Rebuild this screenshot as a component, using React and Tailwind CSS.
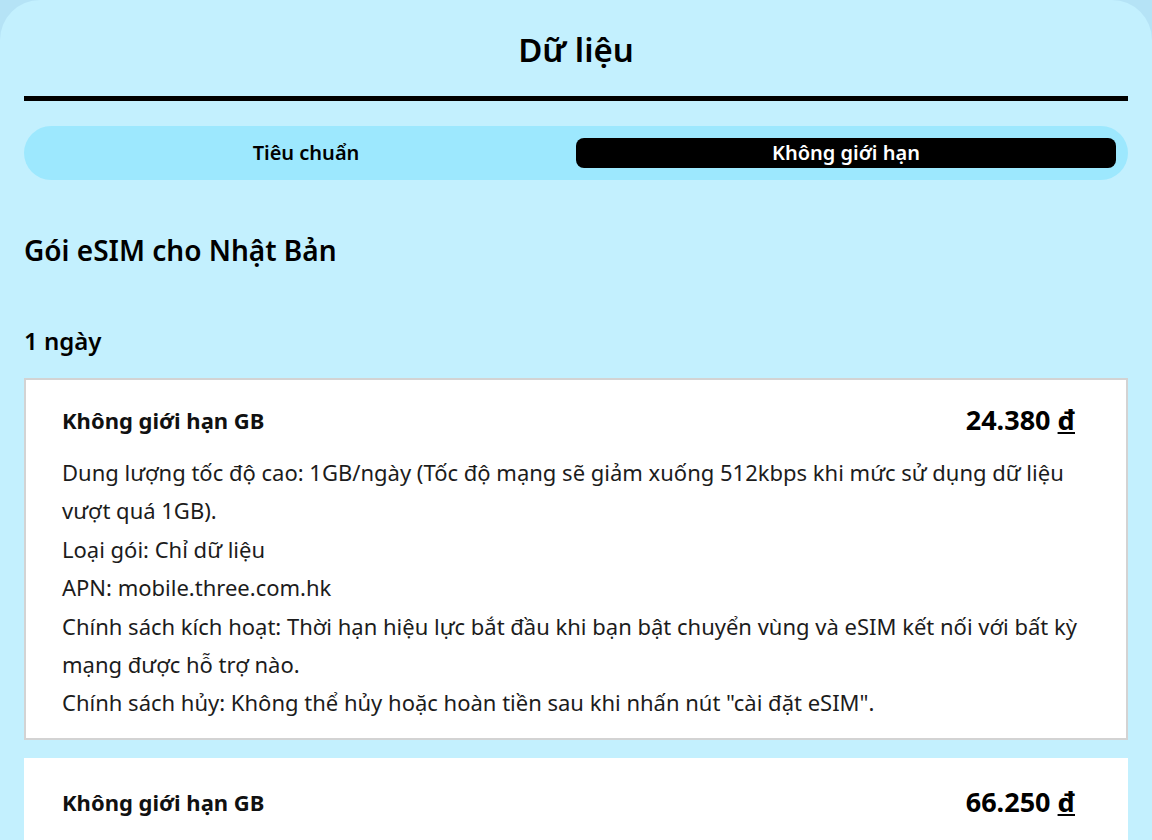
import React from 'react';

const plans = [
  {
    title: 'Không giới hạn GB',
    price: '24.380',
    lines: [
      'Dung lượng tốc độ cao: 1GB/ngày (Tốc độ mạng sẽ giảm xuống 512kbps khi mức sử dụng dữ liệu vượt quá 1GB).',
      'Loại gói: Chỉ dữ liệu',
      'APN: mobile.three.com.hk',
      'Chính sách kích hoạt: Thời hạn hiệu lực bắt đầu khi bạn bật chuyển vùng và eSIM kết nối với bất kỳ mạng được hỗ trợ nào.',
      'Chính sách hủy: Không thể hủy hoặc hoàn tiền sau khi nhấn nút "cài đặt eSIM".',
    ],
  },
  {
    title: 'Không giới hạn GB',
    price: '66.250',
    lines: [
      'Dung lượng tốc độ cao: 3GB/ngày (Tốc độ mạng sẽ giảm xuống 512kbps khi mức sử dụng dữ liệu vượt quá 3GB).',
      'Loại gói: Chỉ dữ liệu',
      'APN: mobile.three.com.hk',
    ],
  },
];

function PlanCard({ plan, selected }) {
  return (
    <div
      className={`border-2 bg-white pl-[36px] pr-[36px] pb-[16px] ${
        selected ? 'border-[#d3d3d3] pt-[26px]' : 'border-transparent pt-[28px]'
      }`}
    >
      <div className="flex items-center justify-between leading-[28px]">
        <span className="text-[22px] font-bold text-[#111]">{plan.title}</span>
        <span className="mr-[15px] text-[27px] font-bold text-black">
          {plan.price} <u>đ</u>
        </span>
      </div>
      <div className="mt-[19px] text-[22px] leading-[38.4px] text-[#1c1c1c]">
        {plan.lines.map((l, i) => (
          <p key={i}>{l}</p>
        ))}
      </div>
    </div>
  );
}

export default function App() {
  const [tab, setTab] = React.useState('unlimited');

  return (
    <div
      className="min-h-screen bg-[#b5e3f6]"
      style={{ fontFamily: '"Noto Sans", "Open Sans", sans-serif' }}
    >
      <div className="min-h-screen rounded-t-[40px] bg-[#c3f0fe] px-6 pb-10">
        <h1 className="pt-[30px] text-center text-[33px] font-semibold leading-[40px] text-black">
          Dữ liệu
        </h1>
        <div className="mt-[26px] h-[5px] bg-black" />

        {/* Tabs */}
        <div className="mt-[25px] flex h-[54px] rounded-[27px] bg-[#9de8fe] p-3">
          {[['standard', 'Tiêu chuẩn'], ['unlimited', 'Không giới hạn']].map(([k, label]) => (
            <button
              key={k}
              onClick={() => setTab(k)}
              className={`flex-1 rounded-lg text-[20px] font-semibold leading-[30px] ${
                tab === k ? 'bg-black text-white' : 'text-black'
              }`}
            >
              {label}
            </button>
          ))}
        </div>

        <h2 className="mt-[52px] text-[28px] font-semibold leading-[36px] text-black">
          Gói eSIM cho Nhật Bản
        </h2>
        <h3 className="mt-[57px] text-[24px] font-semibold leading-[32px] text-black">1 ngày</h3>

        <div className="mt-[21px] flex flex-col gap-[18px]">
          {plans.map((p, i) => (
            <PlanCard key={i} plan={p} selected={i === 0} />
          ))}
        </div>
      </div>
    </div>
  );
}
